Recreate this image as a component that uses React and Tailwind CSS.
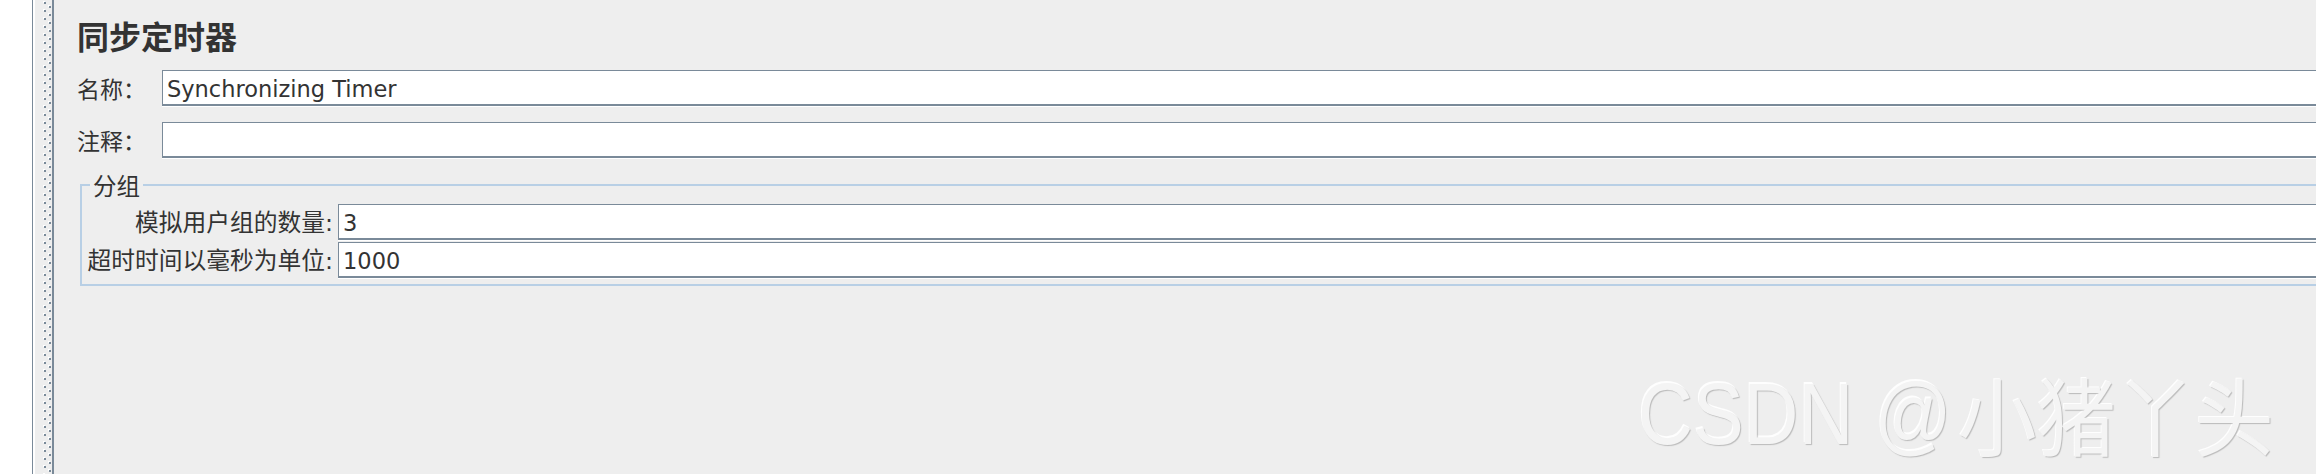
import React from "react";

function Field({ value = "" }) {
  return (
    <div className="flex h-[36px] flex-1 items-center border-l border-t border-[#7a8a99] bg-white pl-[4px] pt-[2px] shadow-[inset_0_-2px_0_#7a8a99,0_1px_0_#ffffff] font-['DejaVu_Sans',sans-serif] text-[22.5px] leading-none text-[#333333]">
      {value}
    </div>
  );
}

export default function App() {
  return (
    <div className="relative flex h-[474px] w-[2316px] overflow-hidden bg-white text-[#333333] font-['DejaVu_Sans','Noto_Sans_CJK_SC',sans-serif]">
      <div className="w-[32px] shrink-0 bg-white" />
      <div className="w-px shrink-0 bg-[#7a8a99]" />
      <div className="w-[2px] shrink-0 bg-white" />
      <div className="w-[17px] shrink-0 bg-[#eeeeee]">
        <svg width="17" height="474" className="block">
          <defs>
            <pattern id="bumps" width="17" height="8" patternUnits="userSpaceOnUse">
              <rect x="8" y="1" width="2" height="2" fill="#ffffff" />
              <rect x="9" y="2" width="2" height="2" fill="#7a8a99" />
              <rect x="13" y="5" width="2" height="2" fill="#ffffff" />
              <rect x="14" y="6" width="2" height="2" fill="#7a8a99" />
            </pattern>
          </defs>
          <rect width="17" height="474" fill="url(#bumps)" />
        </svg>
      </div>
      <div className="w-[2px] shrink-0 bg-[#7a8a99]" />
      <div className="flex-1 overflow-hidden bg-[#eeeeee]">
        <div className="flex w-[2400px] flex-col pl-[23px] pt-[19px]">
          <div className="h-[32px] text-[32px] leading-none font-bold font-['Noto_Sans_CJK_SC',sans-serif]">
            同步定时器
          </div>
          <div className="mt-[19px] flex items-center">
            <div className="w-[85px] shrink-0 text-[23px] leading-none font-['Noto_Sans_CJK_SC',sans-serif]">
              名称：
            </div>
            <Field value="Synchronizing Timer" />
          </div>
          <div className="mt-[16px] flex items-center">
            <div className="w-[85px] shrink-0 text-[23px] leading-none font-['Noto_Sans_CJK_SC',sans-serif]">
              注释：
            </div>
            <Field />
          </div>
          <div className="relative ml-[3px] mt-[26px] border-2 border-[#b8cfe5] pb-[6px] pt-[18px]">
            <div className="absolute left-[8px] top-[-14px] bg-[#eeeeee] px-[3px] text-[23.5px] leading-[26px] font-['Noto_Sans_CJK_SC',sans-serif]">
              分组
            </div>
            <div className="flex flex-col gap-[2px]">
              <div className="flex items-center">
                <div className="w-[251px] shrink-0 text-right text-[23.75px] leading-none">
                  <span className="font-['Noto_Sans_CJK_SC',sans-serif]">模拟用户组的数量</span>
                  <span className="font-['DejaVu_Sans',sans-serif]">:</span>
                </div>
                <div className="ml-[5px] flex flex-1">
                  <Field value="3" />
                </div>
              </div>
              <div className="flex items-center">
                <div className="w-[251px] shrink-0 text-right text-[23.75px] leading-none">
                  <span className="font-['Noto_Sans_CJK_SC',sans-serif]">超时时间以毫秒为单位</span>
                  <span className="font-['DejaVu_Sans',sans-serif]">:</span>
                </div>
                <div className="ml-[5px] flex flex-1">
                  <Field value="1000" />
                </div>
              </div>
            </div>
          </div>
        </div>
      </div>

      <div className="pointer-events-none absolute left-[1638px] top-[370px] flex items-start text-[#f4f4f4] [text-shadow:1px_1px_1px_rgba(0,0,0,0.22),-1px_-1px_0_rgba(255,255,255,0.9)]">
        <span className="inline-block origin-top scale-y-[1.15] whitespace-pre text-[76px] leading-none font-['Liberation_Sans',sans-serif]">
          CSDN @
        </span>
        <span className="ml-[6px] inline-block origin-top scale-y-[1.08] text-[79px] leading-none font-['Noto_Sans_CJK_SC',sans-serif]">
          小猪丫头
        </span>
      </div>
    </div>
  );
}
